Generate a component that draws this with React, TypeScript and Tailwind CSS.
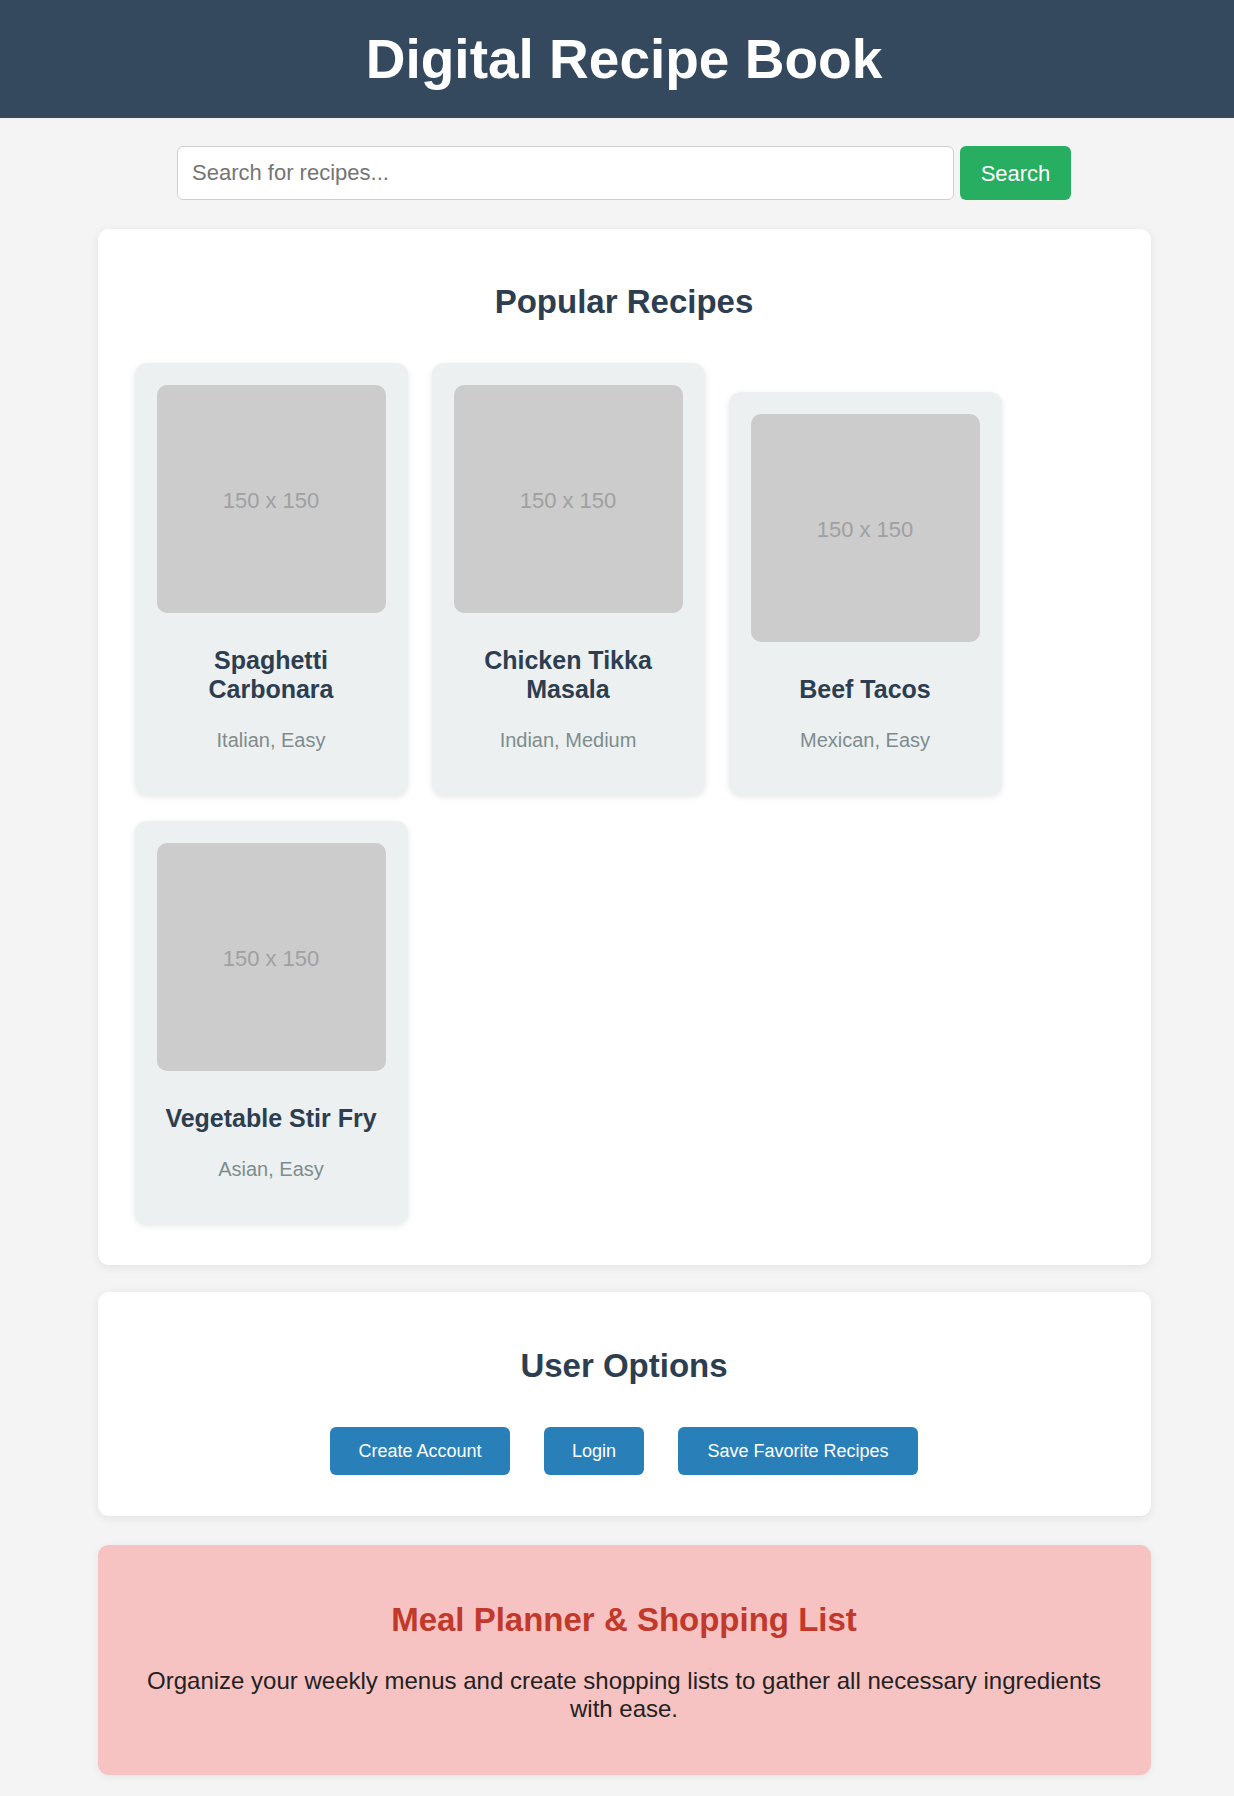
const recipes = [
  { name: "Spaghetti Carbonara", info: "Italian, Easy" },
  { name: "Chicken Tikka Masala", info: "Indian, Medium" },
  { name: "Beef Tacos", info: "Mexican, Easy" },
  { name: "Vegetable Stir Fry", info: "Asian, Easy" },
]

function RecipeCard({ name, info }: { name: string; info: string }) {
  return (
    <div className="w-[273px] rounded-[12px] bg-[#ecf0f1] px-[22px] pt-[22px] pb-[43px] text-center shadow-[0_2px_6px_rgba(0,0,0,0.1)]">
      <div className="flex h-[228px] w-full items-center justify-center rounded-[10px] bg-[#cccccc] pt-[2px] text-[22px] text-[#a0a0a0]">
        150 x 150
      </div>
      <h3 className="mt-[33px] text-[25px] font-bold leading-[29px] text-[#2c3e50]">{name}</h3>
      <p className="mt-[25px] text-[20px] leading-[23px] text-[#7f8c8d]">{info}</p>
    </div>
  )
}

export default function App() {
  return (
    <div className="min-h-screen bg-[#f4f4f4] pb-[22px] font-['Liberation_Sans',Arial,sans-serif]">
      <header className="flex h-[118px] items-center justify-center bg-[#34495e] pl-[14px]">
        <h1 className="text-[55px] font-bold leading-none text-white">Digital Recipe Book</h1>
      </header>

      <main className="pl-[14px]">
        <div className="mx-auto w-[1053px]">
          <div className="mt-[28px] flex justify-center gap-[6px]">
            <input
              type="text"
              placeholder="Search for recipes..."
              className="h-[54px] w-[777px] rounded-[6px] border border-[#cfcfcf] bg-white px-[14px] text-[22px] text-[#333] placeholder:text-[#757575] outline-none"
            />
            <button className="h-[54px] w-[111px] rounded-[6px] bg-[#27ae60] text-[22px] text-white">Search</button>
          </div>

          <section className="mt-[29px] rounded-[11px] bg-white px-[37px] pt-[54px] pb-[41px] shadow-[0_2px_10px_rgba(0,0,0,0.08)]">
            <h2 className="text-center text-[33px] font-bold leading-[38px] text-[#2c3e50]">Popular Recipes</h2>
            <div className="mt-[42px] flex flex-wrap items-end gap-x-[24px] gap-y-[26px]">
              {recipes.map((r) => (
                <RecipeCard key={r.name} name={r.name} info={r.info} />
              ))}
            </div>
          </section>

          <section className="mt-[27px] rounded-[11px] bg-white px-[37px] pt-[55px] pb-[41px] shadow-[0_2px_10px_rgba(0,0,0,0.08)]">
            <h2 className="text-center text-[33px] font-bold leading-[38px] text-[#2c3e50]">User Options</h2>
            <div className="mt-[42px] flex justify-center gap-[34px]">
              <button className="h-[48px] w-[180px] rounded-[6px] bg-[#2980b9] text-[18px] text-white">Create Account</button>
              <button className="h-[48px] w-[100px] rounded-[6px] bg-[#2980b9] text-[18px] text-white">Login</button>
              <button className="h-[48px] w-[240px] rounded-[6px] bg-[#2980b9] text-[18px] text-white">Save Favorite Recipes</button>
            </div>
          </section>

          <section className="mt-[29px] rounded-[11px] bg-[#f7c2c2] px-[25px] pt-[56px] pb-[52px] text-center shadow-[0_2px_10px_rgba(0,0,0,0.06)]">
            <h2 className="text-[33px] font-bold leading-[38px] text-[#c0392b]">Meal Planner &amp; Shopping List</h2>
            <p className="mt-[28px] text-[24px] leading-[28px] text-[#222]">
              Organize your weekly menus and create shopping lists to gather all necessary ingredients with ease.
            </p>
          </section>
        </div>
      </main>
    </div>
  )
}
